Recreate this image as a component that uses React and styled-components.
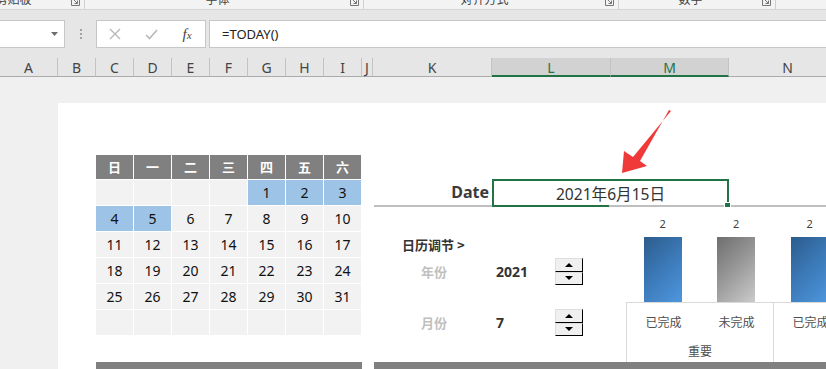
import React from "react";
import styled, { createGlobalStyle, css } from "styled-components";

const GlobalStyle = createGlobalStyle`
  html, body { margin: 0; padding: 0; background: #f0f0f0; }
  body {
    font-family: "Noto Sans", "Noto Sans CJK SC", sans-serif;
    overflow: hidden;
  }
`;

const Root = styled.div`
  position: relative;
  width: 826px;
  height: 369px;
  overflow: hidden;
  display: flex;
  flex-direction: column;
`;

/* ---------- ribbon strip ---------- */
const Ribbon = styled.div`
  height: 10px;
  flex: none;
  box-sizing: border-box;
  background: #f3f3f3;
  border-bottom: 1px solid #d5d5d5;
  overflow: hidden;
`;
const RibbonInner = styled.div`
  display: flex;
  margin-left: -44px;
  height: 9px;
`;
const RibbonGroup = styled.div`
  flex: none;
  width: ${(p) => p.$w}px;
  box-sizing: border-box;
  display: flex;
  align-items: flex-start;
  border-right: 1px solid #d0d0d0;
`;
const RibbonLabel = styled.div`
  flex: 1;
  text-align: center;
  font-family: "Noto Sans CJK SC", sans-serif;
  font-size: 12px;
  line-height: 14px;
  margin-top: -8px;
  color: #444;
  white-space: nowrap;
`;
const Launcher = styled.svg`
  flex: none;
  width: 9px;
  height: 9px;
  margin: -3px 4px 0 0;
`;

/* ---------- formula band ---------- */
const Band = styled.div`
  height: 48px;
  flex: none;
  box-sizing: border-box;
  background: #e6e6e6;
  padding-top: 10px;
`;
const FormulaRow = styled.div`
  display: flex;
  height: 28px;
`;
const NameBox = styled.div`
  flex: none;
  width: 66px;
  margin-left: -1px;
  box-sizing: border-box;
  background: #fff;
  border: 1px solid #c6c6c6;
  display: flex;
  align-items: center;
  justify-content: flex-end;
  padding-right: 6px;
`;
const Dots = styled.div`
  flex: none;
  width: 31px;
  display: flex;
  flex-direction: column;
  align-items: center;
  justify-content: center;
  gap: 2px;
  & > span {
    width: 2px;
    height: 2px;
    background: #a3a3a3;
  }
`;
const FxBox = styled.div`
  flex: none;
  display: grid;
  grid-template-columns: repeat(3, 36px);
  background: #fff;
  border: 1px solid #c6c6c6;
  align-items: center;
  justify-items: center;
`;
const Fx = styled.span`
  font-family: "Liberation Serif", serif;
  font-style: italic;
  font-size: 15px;
  color: #444;
  & > small {
    font-size: 11px;
  }
`;
const FormulaInput = styled.div`
  flex: 1;
  margin-left: 3px;
  background: #fff;
  border: 1px solid #c6c6c6;
  border-right: none;
  padding-left: 12px;
  font-size: 13px;
  line-height: 26px;
  color: #222;
`;

/* ---------- column headers ---------- */
const ColHeaders = styled.div`
  display: flex;
  flex: none;
  height: 19px;
  background: #e6e6e6;
`;
const ColHeader = styled.div`
  flex: none;
  width: ${(p) => p.$w}px;
  box-sizing: border-box;
  border-right: 1px solid #c3c3c3;
  border-bottom: 1px solid #ababab;
  text-align: center;
  font-size: 14px;
  line-height: 20px;
  color: #444;
  ${(p) =>
    p.$sel &&
    css`
      background: #d2d2d2;
      color: #217346;
      border-bottom: 2px solid #217346;
    `}
`;

/* ---------- sheet ---------- */
const Sheet = styled.div`
  flex: 1;
  display: flex;
  background: #f0f0f0;
  padding: 26px 0 0 58px;
`;
const Dashboard = styled.div`
  flex: 1;
  display: flex;
  gap: 12px;
  padding-left: 38px;
  background: #fff;
`;
const CalColumn = styled.div`
  flex: none;
  width: 266px;
  display: flex;
  flex-direction: column;
  padding-top: 52px;
`;
const CalGrid = styled.div`
  display: grid;
  grid-template-columns: repeat(7, 37px);
  grid-template-rows: 24px repeat(6, 25px);
  gap: 1px;
  width: 265px;
`;
const CalHead = styled.div`
  background: #808080;
  color: #fff;
  font-family: "Noto Sans CJK SC", sans-serif;
  font-weight: 700;
  font-size: 13px;
  line-height: 24px;
  text-align: center;
`;
const CalCell = styled.div`
  background: ${(p) => (p.$hl ? "#9dc3e6" : "#f2f2f2")};
  color: #111;
  font-size: 14px;
  line-height: 25px;
  text-align: center;
`;
const FooterBar = styled.div`
  margin-top: auto;
  height: 7px;
  background: #808080;
`;

const RightColumn = styled.div`
  flex: 1;
  min-width: 0;
  display: flex;
  flex-direction: column;
`;
const DateRow = styled.div`
  margin-top: 76px;
  height: 28px;
  box-sizing: border-box;
  display: flex;
  align-items: flex-start;
  border-bottom: 2px solid #bfbfbf;
`;
const DateLabel = styled.div`
  flex: none;
  width: 118px;
  box-sizing: border-box;
  padding-right: 3px;
  text-align: right;
  font-weight: 700;
  font-size: 16px;
  line-height: 27px;
  color: #3a3a3a;
`;
const DateCell = styled.div`
  position: relative;
  flex: none;
  width: 237px;
  height: 28px;
  box-sizing: border-box;
  border: 2px solid #217346;
  border-bottom: none;
  text-align: center;
  font-family: "Noto Sans", "Noto Sans CJK SC", sans-serif;
  font-size: 15.6px;
  line-height: 27px;
  color: #333;
  &::after {
    content: "";
    position: absolute;
    left: -2px;
    bottom: 0;
    width: 117px;
    height: 2px;
    background: #217346;
  }
  &::before {
    content: "";
    position: absolute;
    right: -4px;
    bottom: -1px;
    width: 5px;
    height: 4px;
    background: #217346;
    border: 1px solid #fff;
  }
`;

const LowerRow = styled.div`
  display: flex;
  height: 155px;
`;
const Controls = styled.div`
  flex: none;
  width: 252px;
  box-sizing: border-box;
  padding: 30px 0 0 28px;
`;
const ControlsTitle = styled.div`
  font-family: "Noto Sans CJK SC", sans-serif;
  font-weight: 700;
  font-size: 13px;
  line-height: 16px;
  color: #333;
`;
const SpinRow = styled.div`
  display: flex;
  align-items: center;
  height: 27px;
  margin: ${(p) => p.$top}px 0 0 19px;
`;
const SpinLabel = styled.div`
  flex: none;
  width: 75px;
  font-family: "Noto Sans CJK SC", sans-serif;
  font-weight: 700;
  font-size: 13px;
  color: #c0c0c0;
`;
const SpinValue = styled.div`
  flex: none;
  width: 59px;
  font-weight: 700;
  font-size: 14px;
  color: #333;
`;
const Spinner = styled.div`
  flex: none;
  width: 28px;
  height: 27px;
  display: flex;
  flex-direction: column;
`;
const SpinBtn = styled.div`
  flex: 1;
  box-sizing: border-box;
  background: #f0f0f0;
  border-top: 1px solid #dedede;
  border-left: 1px solid #dedede;
  border-right: 1px solid #000;
  border-bottom: 1px solid #000;
  display: flex;
  align-items: center;
  justify-content: center;
`;

const Chart = styled.div`
  flex: 1;
  min-width: 0;
  display: flex;
  flex-direction: column;
`;
const Plot = styled.div`
  height: 95px;
  flex: none;
  display: flex;
  align-items: flex-end;
`;
const Slot = styled.div`
  flex: none;
  width: 73.5px;
  display: flex;
  flex-direction: column;
  align-items: center;
`;
const BarValue = styled.div`
  font-size: 11px;
  line-height: 13px;
  color: #404040;
  margin-bottom: 7px;
`;
const Bar = styled.div`
  width: 38px;
  height: 65px;
  background: ${(p) =>
    p.$kind === "gray"
      ? "linear-gradient(135deg, #6e6e6e 0%, #9a9a9a 50%, #cbcbcb 100%)"
      : "linear-gradient(135deg, #2c5c8c 0%, #3c7ab9 50%, #4e97dd 100%)"};
`;
const Axis = styled.div`
  flex: 1;
  display: flex;
  border-top: 1px solid #d9d9d9;
`;
const AxisGroup = styled.div`
  flex: none;
  width: 147px;
  box-sizing: border-box;
  border-left: 1px solid #d9d9d9;
  display: flex;
  flex-direction: column;
`;
const CatRow = styled.div`
  display: flex;
`;
const CatLabel = styled.div`
  flex: 1;
  text-align: center;
  font-family: "Noto Sans CJK SC", sans-serif;
  font-size: 12px;
  line-height: 16px;
  padding-top: 11px;
  color: #4f4f4f;
  white-space: nowrap;
`;
const GroupLabel = styled.div`
  text-align: center;
  font-family: "Noto Sans CJK SC", sans-serif;
  font-size: 12px;
  line-height: 16px;
  padding-top: 13px;
  color: #4f4f4f;
`;

const Overlay = styled.svg`
  position: absolute;
  left: 0;
  top: 0;
  width: 826px;
  height: 369px;
  pointer-events: none;
`;

const ribbonGroups = [
  { w: 129, label: "剪贴板" },
  { w: 279, label: "字体" },
  { w: 255, label: "对齐方式" },
  { w: 157, label: "数字" },
  { w: 200, label: "", none: true },
];

const columns = [
  ["A", 58],
  ["B", 38],
  ["C", 38],
  ["D", 38],
  ["E", 38],
  ["F", 38],
  ["G", 38],
  ["H", 38],
  ["I", 38],
  ["J", 11],
  ["K", 119],
  ["L", 119, true],
  ["M", 118, true],
  ["N", 118],
];

const weekdays = ["日", "一", "二", "三", "四", "五", "六"];

function LauncherIcon() {
  return (
    <Launcher viewBox="0 0 9 9">
      <path d="M0.5 0.5V8.5H8.5V0.5" fill="none" stroke="#777" strokeWidth="1" />
      <path d="M2.5 2.5L6.5 6.5M6.5 3.5V6.5H3.5" fill="none" stroke="#777" strokeWidth="1" />
    </Launcher>
  );
}

function SpinArrow({ up }) {
  return (
    <svg width="8" height="4" viewBox="0 0 8 4">
      <path d={up ? "M0 4L4 0L8 4Z" : "M0 0L8 0L4 4Z"} fill="#000" />
    </svg>
  );
}

export default function App() {
  const cells = [];
  for (let i = 0; i < 42; i++) {
    const d = i - 3;
    const valid = d >= 1 && d <= 31;
    cells.push(
      <CalCell key={i} $hl={valid && d <= 5}>
        {valid ? d : ""}
      </CalCell>
    );
  }

  return (
    <Root>
      <GlobalStyle />
      <Ribbon>
        <RibbonInner>
          {ribbonGroups.map((g, i) => (
            <RibbonGroup key={i} $w={g.w}>
              <RibbonLabel>{g.label}</RibbonLabel>
              {!g.none && <LauncherIcon />}
            </RibbonGroup>
          ))}
        </RibbonInner>
      </Ribbon>

      <Band>
        <FormulaRow>
          <NameBox>
            <svg width="7" height="4" viewBox="0 0 7 4">
              <path d="M0 0H7L3.5 4Z" fill="#6d6d6d" />
            </svg>
          </NameBox>
          <Dots>
            <span />
            <span />
            <span />
          </Dots>
          <FxBox>
            <svg width="12" height="12" viewBox="0 0 12 12">
              <path d="M1 1L11 11M11 1L1 11" stroke="#b8b8b8" strokeWidth="1.4" />
            </svg>
            <svg width="13" height="11" viewBox="0 0 13 11">
              <path d="M1 6L4.5 9.5L12 1" fill="none" stroke="#b8b8b8" strokeWidth="1.6" />
            </svg>
            <Fx>
              f<small>x</small>
            </Fx>
          </FxBox>
          <FormulaInput>=TODAY()</FormulaInput>
        </FormulaRow>
      </Band>

      <ColHeaders>
        {columns.map(([n, w, sel]) => (
          <ColHeader key={n} $w={w} $sel={sel}>
            {n}
          </ColHeader>
        ))}
      </ColHeaders>

      <Sheet>
        <Dashboard>
          <CalColumn>
            <CalGrid>
              {weekdays.map((w) => (
                <CalHead key={w}>{w}</CalHead>
              ))}
              {cells}
            </CalGrid>
            <FooterBar />
          </CalColumn>

          <RightColumn>
            <DateRow>
              <DateLabel>Date</DateLabel>
              <DateCell>2021年6月15日</DateCell>
            </DateRow>
            <LowerRow>
              <Controls>
                <ControlsTitle>日历调节 &gt;</ControlsTitle>
                <SpinRow $top={5}>
                  <SpinLabel>年份</SpinLabel>
                  <SpinValue>2021</SpinValue>
                  <Spinner>
                    <SpinBtn>
                      <SpinArrow up />
                    </SpinBtn>
                    <SpinBtn>
                      <SpinArrow />
                    </SpinBtn>
                  </Spinner>
                </SpinRow>
                <SpinRow $top={24}>
                  <SpinLabel>月份</SpinLabel>
                  <SpinValue>7</SpinValue>
                  <Spinner>
                    <SpinBtn>
                      <SpinArrow up />
                    </SpinBtn>
                    <SpinBtn>
                      <SpinArrow />
                    </SpinBtn>
                  </Spinner>
                </SpinRow>
              </Controls>
              <Chart>
                <Plot>
                  <Slot>
                    <BarValue>2</BarValue>
                    <Bar $kind="blue" />
                  </Slot>
                  <Slot>
                    <BarValue>2</BarValue>
                    <Bar $kind="gray" />
                  </Slot>
                  <Slot>
                    <BarValue>2</BarValue>
                    <Bar $kind="blue" />
                  </Slot>
                </Plot>
                <Axis>
                  <AxisGroup>
                    <CatRow>
                      <CatLabel>已完成</CatLabel>
                      <CatLabel>未完成</CatLabel>
                    </CatRow>
                    <GroupLabel>重要</GroupLabel>
                  </AxisGroup>
                  <AxisGroup>
                    <CatRow>
                      <CatLabel>已完成</CatLabel>
                      <CatLabel>未完成</CatLabel>
                    </CatRow>
                    <GroupLabel>不重要</GroupLabel>
                  </AxisGroup>
                </Axis>
              </Chart>
            </LowerRow>
            <FooterBar />
          </RightColumn>
        </Dashboard>
      </Sheet>

      <Overlay viewBox="0 0 826 369">
        <polygon
          points="669,110 640,161 647,166 622,173 624,151 633,157 671,111"
          fill="#f03a3a"
        />
      </Overlay>
    </Root>
  );
}
